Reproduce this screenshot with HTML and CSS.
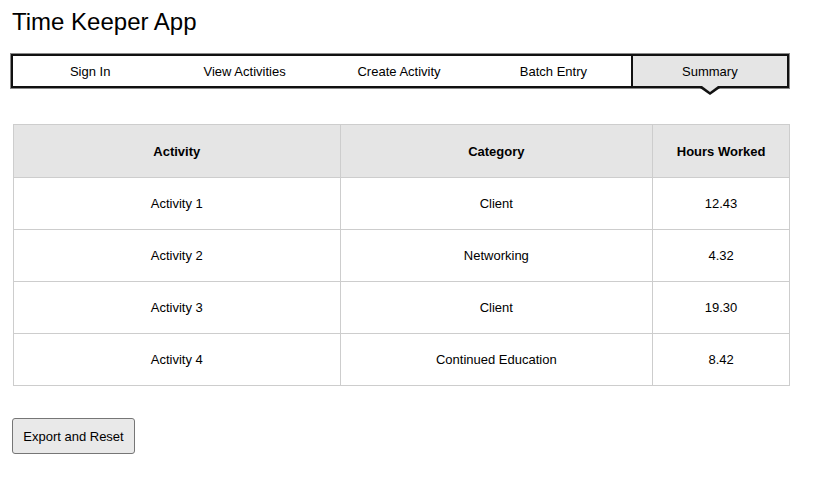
FILE: index.html
```
<!DOCTYPE html>
<html>
<head>
<meta charset="utf-8">
<link rel="stylesheet" href="styles.css">
</head>
<body>
<div class="page">
  <h1 class="title">Time Keeper App</h1>
  <nav class="tabs">
    <a class="tab">Sign In</a>
    <a class="tab">View Activities</a>
    <a class="tab">Create Activity</a>
    <a class="tab">Batch Entry</a>
    <a class="tab active">Summary</a>
  </nav>
  <table class="summary">
    <thead>
      <tr><th class="c1">Activity</th><th class="c2">Category</th><th class="c3">Hours Worked</th></tr>
    </thead>
    <tbody>
      <tr><td>Activity 1</td><td>Client</td><td>12.43</td></tr>
      <tr><td>Activity 2</td><td>Networking</td><td>4.32</td></tr>
      <tr><td>Activity 3</td><td>Client</td><td>19.30</td></tr>
      <tr><td>Activity 4</td><td>Continued Education</td><td>8.42</td></tr>
    </tbody>
  </table>
  <button class="export">Export and Reset</button>
</div>
</body>
</html>
```
FILE: styles.css
```
html, body {
  margin: 0;
  padding: 0;
  background: #fff;
}
body {
  font-family: "Liberation Sans", Arial, sans-serif;
  color: #000;
}
.page {
  padding: 8px 0 0 11px;
  width: 778px;
}
.title {
  margin: 0 0 0 1px;
  font-size: 24px;
  font-weight: normal;
  line-height: 28px;
  height: 28px;
}
.tabs {
  display: flex;
  margin-top: 18px;
  height: 30px;
  border: 2px solid #111;
  box-shadow: 0 0 0 1px #8a8a8a;
}
.tab {
  flex: 1 1 0;
  display: flex;
  align-items: center;
  justify-content: center;
  font-size: 13px;
  box-sizing: border-box;
  position: relative;
}
.tab.active {
  background: #e5e5e5;
  border-left: 2px solid #111;
}
.tab.active::after {
  content: "";
  position: absolute;
  left: 50%;
  top: 100%;
  margin-left: -10px;
  margin-top: 2px;
  border-left: 10px solid transparent;
  border-right: 10px solid transparent;
  border-top: 7px solid #111;
}
.tab.active::before {
  content: "";
  position: absolute;
  left: 50%;
  top: 100%;
  margin-left: -8px;
  margin-top: 0px;
  border-left: 8px solid transparent;
  border-right: 8px solid transparent;
  border-top: 6px solid #e5e5e5;
  z-index: 1;
}
.summary {
  margin: 36px 0 0 2px;
  width: 777px;
  border-collapse: collapse;
  font-size: 13px;
}
.summary th, .summary td {
  border: 1px solid #cdcdcd;
  text-align: center;
  padding: 0;
  height: 51px;
}
.summary th {
  background: #e5e5e5;
  font-weight: bold;
  height: 52px;
}
.summary .c1 { width: 326px; }
.summary .c2 { width: 312px; }
.summary .c3 { width: 136px; }
.export {
  display: block;
  margin: 32px 0 0 1px;
  width: 123px;
  height: 36px;
  font-family: "Liberation Sans", Arial, sans-serif;
  font-size: 13px;
  color: #000;
  background: #e9e9e9;
  border: 1px solid #767676;
  border-radius: 3px;
  padding: 0;
}
```
